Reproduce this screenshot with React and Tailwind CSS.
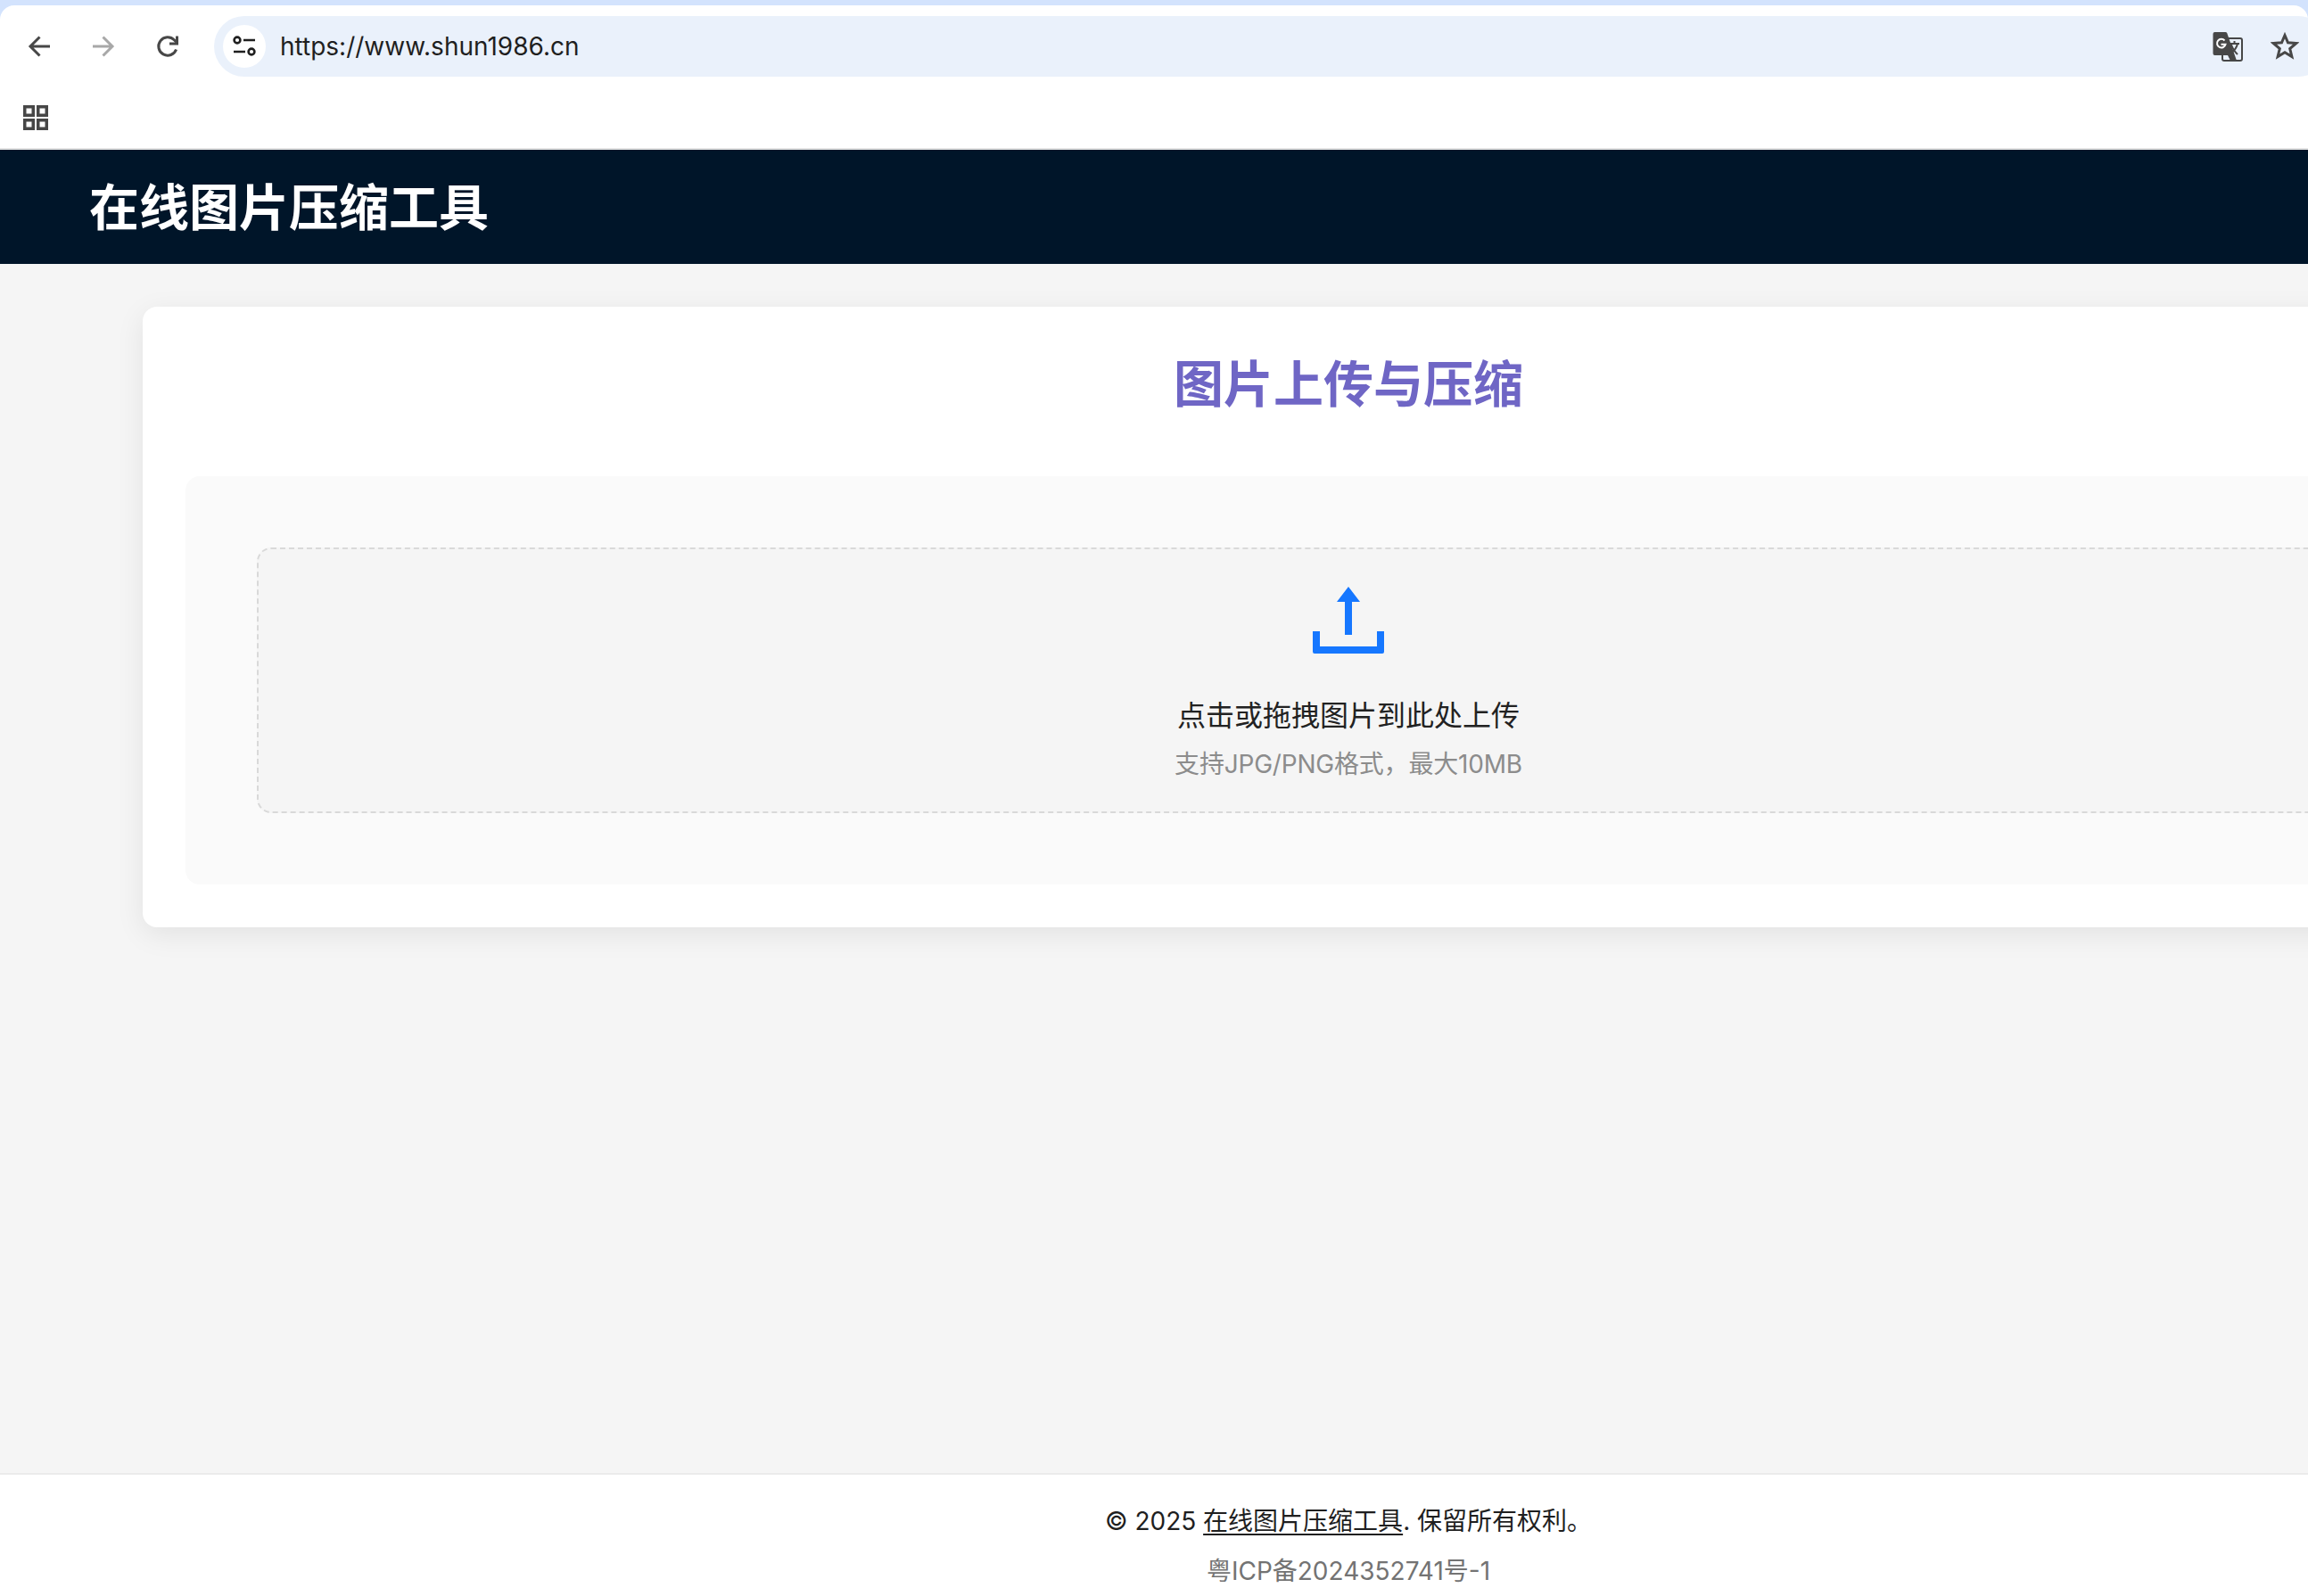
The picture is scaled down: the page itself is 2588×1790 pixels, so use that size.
import React from 'react';

const ArrowIcon = ({ color, flip }) => (
  <svg width="26" height="26" viewBox="0 0 26 26" fill="none" stroke={color} strokeWidth="3" className={flip ? 'rotate-180 shrink-0' : 'shrink-0'}>
    <path d="M25 13H3M13.500 2.500 3 13l10.500 10.500" />
  </svg>
);

const ReloadIcon = () => (
  <svg width="26" height="26" viewBox="0 0 26 26" fill="none" stroke="#474747" strokeWidth="3" className="shrink-0">
    <path d="M22.600 16.500A10.200 10.200 0 1 1 20.300 5.800L23 8.500" />
    <path d="M23.500 1.500v8.500H15" />
  </svg>
);

const TuneIcon = () => (
  <svg width="26" height="26" viewBox="0 0 26 26" fill="none" stroke="#1f1f1f" strokeWidth="2.600">
    <circle cx="5" cy="6" r="3.400" />
    <path d="M12 6h13M1 19h13" />
    <circle cx="21" cy="19" r="3.400" />
  </svg>
);

const TranslateIcon = () => (
  <svg width="34" height="34" viewBox="0 0 34 34">
    <rect x="11" y="8" width="22" height="25" rx="2" fill="none" stroke="#474747" strokeWidth="2" />
    <path d="M2.500 1h12a2 2 0 0 1 1.700 1L27 33H20l-3-6H2.500a2 2 0 0 1-2-2V3a2 2 0 0 1 2-2Z" fill="#474747" />
    <path d="M13.500 10.500a4.800 4.800 0 1 0 1 4.300H9.500" fill="none" stroke="#fff" strokeWidth="2" />
    <path d="M19 14h11M24.500 11v3M28 14c-1 5-4 8-7 10M21 15c1 4 4 8 7 11" fill="none" stroke="#474747" strokeWidth="2" />
  </svg>
);

const StarIcon = () => (
  <svg width="32" height="32" viewBox="0 0 32 32" fill="none" stroke="#474747" strokeWidth="3" strokeLinejoin="miter">
    <path d="M16 4.500 19.500 12.800 28.800 13.500 21.700 19.500 23.900 28.500 16 23.700 8.100 28.500 10.300 19.500 3.200 13.500 12.500 12.800Z" />
  </svg>
);

const AppsIcon = () => (
  <svg width="28" height="28" viewBox="0 0 28 28" fill="none" stroke="#474747" strokeWidth="3.500">
    <rect x="1.750" y="1.750" width="9.500" height="9.500" />
    <rect x="16.750" y="1.750" width="9.500" height="9.500" />
    <rect x="1.750" y="16.750" width="9.500" height="9.500" />
    <rect x="16.750" y="16.750" width="9.500" height="9.500" />
  </svg>
);

const UploadIcon = () => (
  <svg width="80" height="75" viewBox="0 0 80 75" fill="#1677ff">
    <path d="M40 0 53 17H44V54H36V17H27Z" />
    <path d="M0 50H8V67H72V50H80V73a2 2 0 0 1-2 2H2a2 2 0 0 1-2-2Z" />
  </svg>
);

const BrowserBar = () => (
  <div className="bg-[#d3e3fd] pt-[6px]">
    <div className="bg-white rounded-t-[16px] border-b-2 border-[#e3e3e3]">
      <div className="flex items-center h-[92px] pl-[31px]">
        <ArrowIcon color="#474747" />
        <div className="ml-[46px] shrink-0"><ArrowIcon color="#a8a8a8" flip /></div>
        <div className="ml-[46px] shrink-0"><ReloadIcon /></div>
        <div className="ml-[39px] w-[2371px] shrink-0 h-[68px] rounded-full bg-[#eaf1fb] flex items-center pl-[10px]">
          <div className="w-[48px] h-[48px] rounded-full bg-white flex items-center justify-center">
            <TuneIcon />
          </div>
          <span className="ml-[16px] text-[28px] text-[#1f1f1f]">https://www.shun1986.cn</span>
          <div className="ml-auto mr-[96px] flex items-center">
            <TranslateIcon />
          </div>
        </div>
      </div>
      <div className="h-[68px] pl-[26px] pt-[20px]">
        <AppsIcon />
      </div>
    </div>
  </div>
);

const App = () => {
  return (
    <div className="w-[2588px] h-[1790px] overflow-hidden relative font-['Inter','Noto_Sans_CJK_SC',sans-serif]">
      <BrowserBar />
      <div className="absolute top-[35px] left-[2546px]"><StarIcon /></div>

      <div className="w-[3024px]">
        <header className="h-[128px] bg-[#001529] flex items-center px-[100px] pt-[2px]">
          <h1 className="text-[56px] font-semibold text-white leading-none">在线图片压缩工具</h1>
        </header>

        <main className="h-[1356px] bg-[#f5f5f5] px-[160px] py-[48px]">
          <section className="bg-white rounded-[16px] p-[48px] shadow-[0_8px_32px_rgba(0,0,0,0.08)]">
            <h2 className="text-[56px] leading-[78px] font-semibold text-[#6f66c5] text-center mb-[64px]">图片上传与压缩</h2>
            <div className="bg-[#fafafa] rounded-[16px] p-[80px]">
              <div className="h-[298px] border-2 border-dashed border-[#d9d9d9] rounded-[16px] bg-[#f5f5f5] flex flex-col items-center pt-[42px]">
                <UploadIcon />
                <p className="mt-[46px] text-[32px] leading-[48px] text-[#222222]">点击或拖拽图片到此处上传</p>
                <p className="mt-[9px] text-[28px] leading-[42px] tracking-[-0.2px] text-[#8c8c8c]">支持JPG/PNG格式，最大10MB</p>
              </div>
            </div>
          </section>
        </main>

        <footer className="h-[138px] bg-white border-t-2 border-[#ebebeb] flex flex-col items-center pt-[31px]">
          <p className="text-[28px] leading-[42px] text-[#1f1f1f]">
            © 2025 <a className="underline underline-offset-4">在线图片压缩工具</a>. 保留所有权利。
          </p>
          <p className="mt-[14px] text-[28px] leading-[42px] text-[#737373]">粤ICP备2024352741号-1</p>
        </footer>
      </div>
    </div>
  );
};

export default App;
